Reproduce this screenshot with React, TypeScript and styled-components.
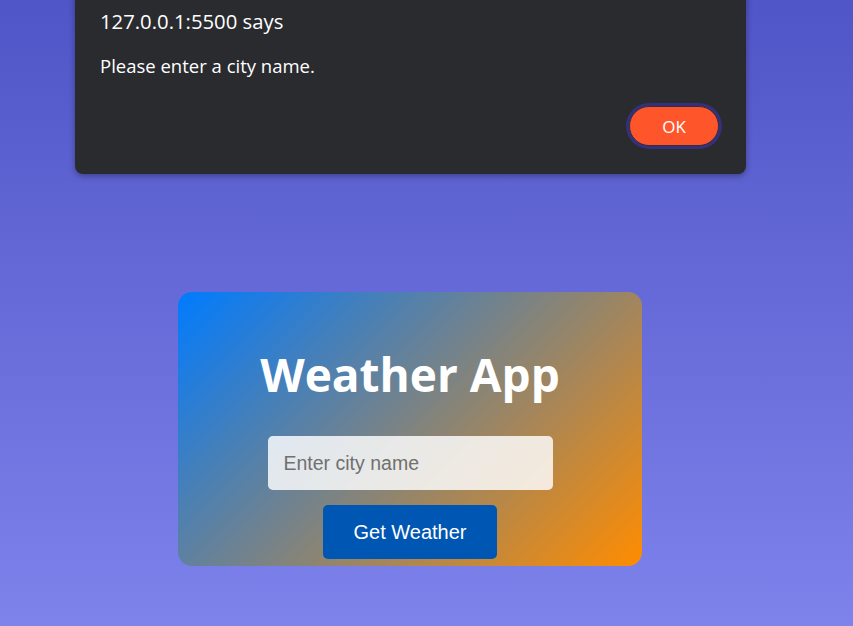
import React from "react";
import styled, { createGlobalStyle } from "styled-components";

const Global = createGlobalStyle`
  html, body { margin: 0; padding: 0; height: 100%; }
  body {
    background: linear-gradient(180deg, #5055c7 0%, #7e82eb 100%);
    font-family: "Open Sans", "Noto Sans", sans-serif;
    overflow: hidden;
  }
  #root { height: 100%; }
`;

const Page = styled.div`
  position: relative;
  width: 820px;
  height: 626px;
  display: flex;
  justify-content: center;
  align-items: flex-start;
  padding-top: 292px;
  box-sizing: border-box;
`;

const Card = styled.div`
  width: 464px;
  height: 274px;
  box-sizing: border-box;
  border-radius: 14px;
  background: linear-gradient(135deg, #007bff 0%, #ff8c00 100%);
  display: flex;
  flex-direction: column;
  align-items: center;
  padding-top: 52px;
`;

const Title = styled.h1`
  margin: 0;
  font-family: "Open Sans", sans-serif;
  font-weight: 700;
  font-size: 46px;
  line-height: 60px;
  color: #ffffff;
`;

const CityInput = styled.input`
  margin-top: 32px;
  width: 285px;
  height: 54px;
  box-sizing: border-box;
  border: none;
  border-radius: 5px;
  padding: 0 16px;
  background: rgba(255, 255, 255, 0.82);
  font-family: "Liberation Sans", Arial, sans-serif;
  font-size: 19.5px;
  color: #333;
  outline: none;
  &::placeholder { color: #707070; }
`;

const Button = styled.button`
  margin-top: 15px;
  width: 174px;
  height: 54px;
  border: none;
  border-radius: 5px;
  background: #0056b3;
  color: #fff;
  font-family: "Liberation Sans", Arial, sans-serif;
  font-size: 20px;
  cursor: pointer;
`;

const Dialog = styled.div`
  position: absolute;
  left: 75px;
  top: -20px;
  width: 671px;
  height: 194px;
  box-sizing: border-box;
  background: #2a2b2f;
  border-radius: 8px;
  box-shadow: 0 2px 6px rgba(0, 0, 0, 0.35);
  padding: 27px 25px 0 25px;
  display: flex;
  flex-direction: column;
  color: #ffffff;
  font-family: "Open Sans", "Noto Sans", sans-serif;
`;

const DialogTitle = styled.div`
  font-size: 20.3px;
  line-height: 28px;
`;

const DialogMessage = styled.div`
  margin-top: 19px;
  font-size: 18.5px;
  line-height: 24px;
`;

const DialogActions = styled.div`
  display: flex;
  justify-content: flex-end;
  margin-top: 28px;
  padding-right: 2px;
`;

const OkButton = styled.button`
  width: 90px;
  height: 40px;
  border-radius: 20px;
  background: #fe552b;
  border: 1px solid #3a2c3a;
  box-shadow: 0 0 0 3px #33317a;
  color: #fff;
  font-family: "Open Sans", sans-serif;
  font-size: 17px;
`;

export default function App() {
  return (
    <>
      <Global />
      <Page>
        <Card>
          <Title>Weather App</Title>
          <CityInput placeholder="Enter city name" />
          <Button>Get Weather</Button>
        </Card>
        <Dialog>
          <DialogTitle>127.0.0.1:5500 says</DialogTitle>
          <DialogMessage>Please enter a city name.</DialogMessage>
          <DialogActions>
            <OkButton>OK</OkButton>
          </DialogActions>
        </Dialog>
      </Page>
    </>
  );
}
